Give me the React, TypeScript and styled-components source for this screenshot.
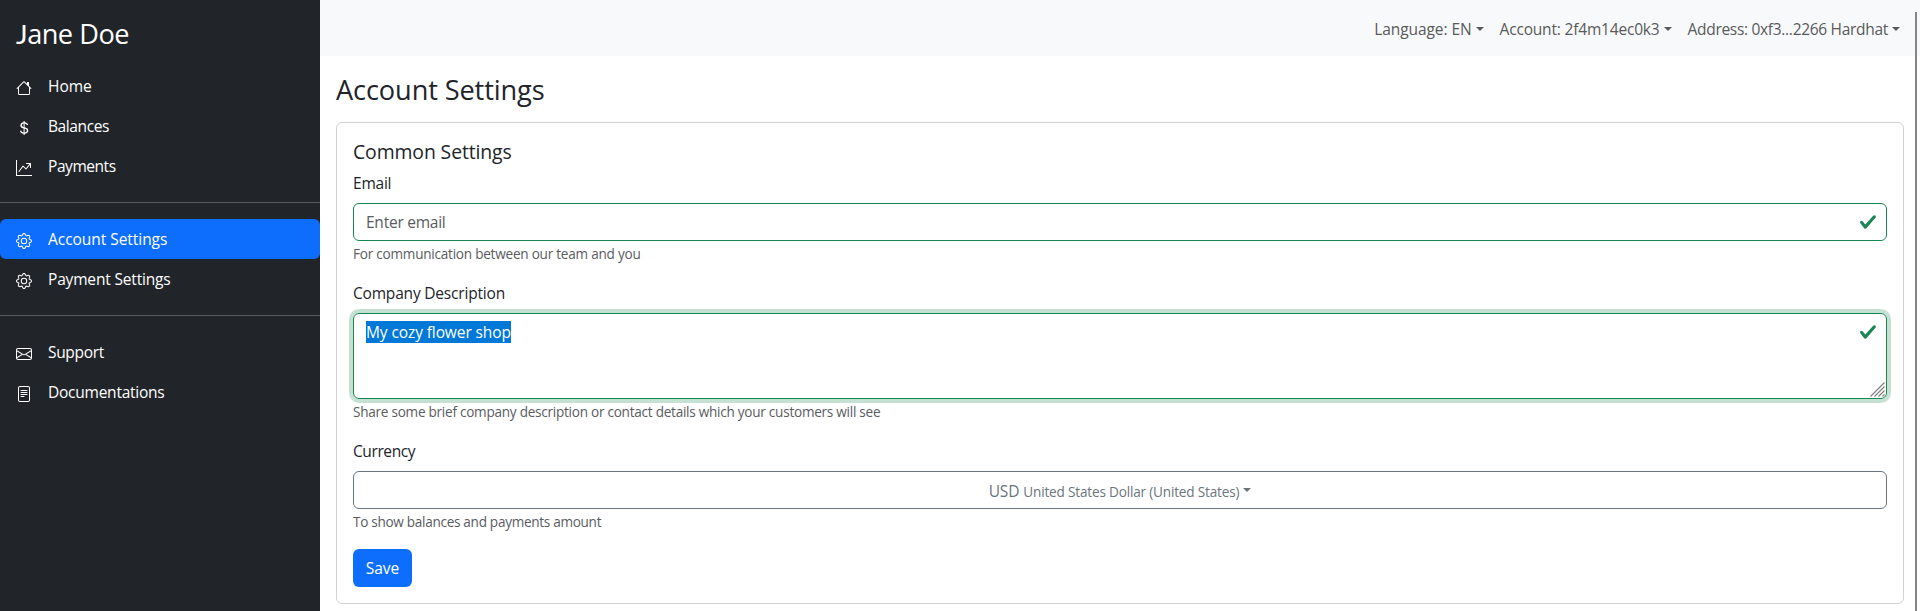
import React from 'react';
import styled, { createGlobalStyle } from 'styled-components';
import {
  BsHouse,
  BsCurrencyDollar,
  BsGraphUpArrow,
  BsGear,
  BsEnvelope,
  BsFileText,
} from 'react-icons/bs';
import type { IconType } from 'react-icons';

const GlobalStyle = createGlobalStyle`
  *, *::before, *::after { box-sizing: border-box; }
  body {
    margin: 0;
    overflow: hidden;
    background: #fff;
    color: #212529;
    font-family: "Open Sans", "Noto Sans", sans-serif;
    font-size: 15.52px;
    line-height: 24px;
    white-space: nowrap;
  }
`;

const Page = styled.div`
  display: flex;
  height: 611px;
  overflow: hidden;
`;

const Sidebar = styled.aside`
  flex: 0 0 320px;
  padding-top: 12px;
  background: #212529;
  color: #fff;
`;

const Brand = styled.div`
  height: 54px;
  padding-left: 16px;
  font-size: 27.16px;
  line-height: 43px;
  letter-spacing: -0.5px;
`;

const Initial = styled.span`
  font-family: Lato, sans-serif;
  font-size: 27.5px;
`;

const NavItem = styled.a<{ $active?: boolean }>`
  display: flex;
  height: 40px;
  padding: 8px 16px;
  border-radius: 6px;
  background: ${(p) => (p.$active ? '#0d6efd' : 'transparent')};

  svg {
    width: 16px;
    height: 16px;
    margin: 6px 16px 0 0;
  }
`;

const Divider = styled.hr`
  height: 1px;
  margin: 16px 0;
  border: 0;
  background: rgba(255, 255, 255, 0.25);
`;

const Text = styled.span<{ $track?: number }>`
  letter-spacing: ${(p) => p.$track ?? 0}px;
`;

const Main = styled.main`
  flex: 1;
  min-width: 0;
`;

const TopBar = styled.header`
  display: flex;
  justify-content: flex-end;
  height: 56px;
  padding: 9px 12px 0;
  background: #f8f9fa;
  color: #595a5b;
`;

const Caret = styled.span`
  display: inline-block;
  margin-left: 4px;
  vertical-align: 4px;
  border-top: 4.8px solid;
  border-right: 4.8px solid transparent;
  border-left: 4.8px solid transparent;
`;

const MenuLink = styled.a`
  padding: 8px;
`;

const Content = styled.section`
  padding: 17px 16px 0;
`;

const PageTitle = styled.h1`
  margin: 0 0 15px;
  font-size: 27.16px;
  font-weight: 400;
  line-height: 34px;
  letter-spacing: -0.11px;
`;

const Card = styled.div`
  height: 482px;
  padding: 17px 16px 16px;
  border: 1px solid rgba(0, 0, 0, 0.175);
  border-radius: 6px;
`;

const CardTitle = styled.h2`
  margin: 0 0 7px;
  font-size: 19.4px;
  font-weight: 400;
  line-height: 24px;
  letter-spacing: -0.11px;
`;

const Label = styled.label`
  display: block;
  margin-bottom: 8px;
`;

const Field = styled.div<{ $height: number; $focused?: boolean }>`
  position: relative;
  height: ${(p) => p.$height}px;
  padding: 6px 12px;
  border: 1px solid #198754;
  border-radius: 6px;
  box-shadow: ${(p) => (p.$focused ? '0 0 0 4px rgba(25, 135, 84, 0.25)' : 'none')};
`;

const Placeholder = styled.span`
  color: #595c5f;
  letter-spacing: -0.25px;
`;

const Selected = styled.span`
  background: #0078d7;
  color: #fff;
  letter-spacing: -0.11px;
`;

const ValidMark = styled.svg`
  position: absolute;
  top: 9px;
  right: 9px;
  width: 18px;
  height: 18px;
`;

const Grip = styled.svg`
  position: absolute;
  right: 1px;
  bottom: 1px;
  width: 15px;
  height: 15px;
`;

const Hint = styled.div<{ $track: number }>`
  margin: 3px 0 17px;
  color: #595c5f;
  font-size: 13.58px;
  line-height: 20px;
  letter-spacing: ${(p) => p.$track}px;
`;

const SelectButton = styled.div`
  height: 38px;
  padding: 7px 12px 5px;
  border: 1px solid #6c757d;
  border-radius: 6px;
  color: #6c757d;
  text-align: center;

  small {
    font-size: 13.58px;
    letter-spacing: -0.18px;
  }

  ${Caret} {
    vertical-align: 5px;
  }
`;

const SaveButton = styled.button`
  display: block;
  width: 59px;
  height: 38px;
  padding: 0;
  border: 0;
  border-radius: 6px;
  background: #0d6efd;
  color: #fff;
  font: inherit;
`;

const ScrollThumb = styled.div`
  position: absolute;
  top: 12px;
  right: 3px;
  width: 2px;
  height: 599px;
  background: #858585;
`;

const Check = () => (
  <ValidMark viewBox="0 0 8 8">
    <path
      fill="#198754"
      d="M2.3 6.73.6 4.53c-.4-1.04.46-1.4 1.1-.8l1.1 1.4 3.4-3.8c.6-.63 1.6-.27 1.2.7l-4 4.6c-.43.5-.8.4-1.1.1z"
    />
  </ValidMark>
);

interface Item {
  icon: IconType;
  label: string;
  track: number;
  active?: boolean;
}

const groups: Item[][] = [
  [
    { icon: BsHouse, label: 'Home', track: -0.05 },
    { icon: BsCurrencyDollar, label: 'Balances', track: -0.4 },
    { icon: BsGraphUpArrow, label: 'Payments', track: -0.45 },
  ],
  [
    { icon: BsGear, label: 'Account Settings', track: -0.05, active: true },
    { icon: BsGear, label: 'Payment Settings', track: -0.18 },
  ],
  [
    { icon: BsEnvelope, label: 'Support', track: -0.33 },
    { icon: BsFileText, label: 'Documentations', track: -0.25 },
  ],
];

const menus = [
  { label: 'Language: EN', track: -0.08 },
  { label: 'Account: 2f4m14ec0k3', track: -0.19 },
  { label: 'Address: 0xf3...2266 Hardhat', track: -0.31 },
];

export default function App() {
  return (
    <Page>
      <GlobalStyle />
      <Sidebar>
        <Brand>
          <Initial>J</Initial>ane Doe
        </Brand>
        {groups.map((items, index) => (
          <React.Fragment key={index}>
            {index > 0 && <Divider />}
            {items.map(({ icon: Icon, label, track, active }) => (
              <NavItem key={label} $active={active}>
                <Icon />
                <Text $track={track}>{label}</Text>
              </NavItem>
            ))}
          </React.Fragment>
        ))}
      </Sidebar>
      <Main>
        <TopBar>
          {menus.map(({ label, track }) => (
            <MenuLink key={label}>
              <Text $track={track}>{label}</Text>
              <Caret />
            </MenuLink>
          ))}
        </TopBar>
        <Content>
          <PageTitle>Account Settings</PageTitle>
          <Card>
            <CardTitle>Common Settings</CardTitle>
            <Label>
              <Text $track={-0.23}>Email</Text>
            </Label>
            <Field $height={38}>
              <Placeholder>Enter email</Placeholder>
              <Check />
            </Field>
            <Hint $track={-0.24}>For communication between our team and you</Hint>
            <Label>
              <Text $track={-0.2}>Company Description</Text>
            </Label>
            <Field $height={86} $focused>
              <Selected>My cozy flower shop</Selected>
              <Check />
              <Grip viewBox="0 0 15 15" fill="none" stroke="#808080" strokeWidth="1.2">
                <path d="M0.5 14.5 14.5 0.5M4.5 14.5 14.5 4.5M8.5 14.5 14.5 8.5M12.5 14.5 14.5 12.5" />
              </Grip>
            </Field>
            <Hint $track={-0.26}>
              Share some brief company description or contact details which your customers will see
            </Hint>
            <Label>
              <Text $track={-0.4}>Currency</Text>
            </Label>
            <SelectButton>
              <Text $track={-0.16}>USD</Text> <small>United States Dollar (United States)</small>
              <Caret />
            </SelectButton>
            <Hint $track={-0.3}>To show balances and payments amount</Hint>
            <SaveButton>Save</SaveButton>
          </Card>
        </Content>
      </Main>
      <ScrollThumb />
    </Page>
  );
}
